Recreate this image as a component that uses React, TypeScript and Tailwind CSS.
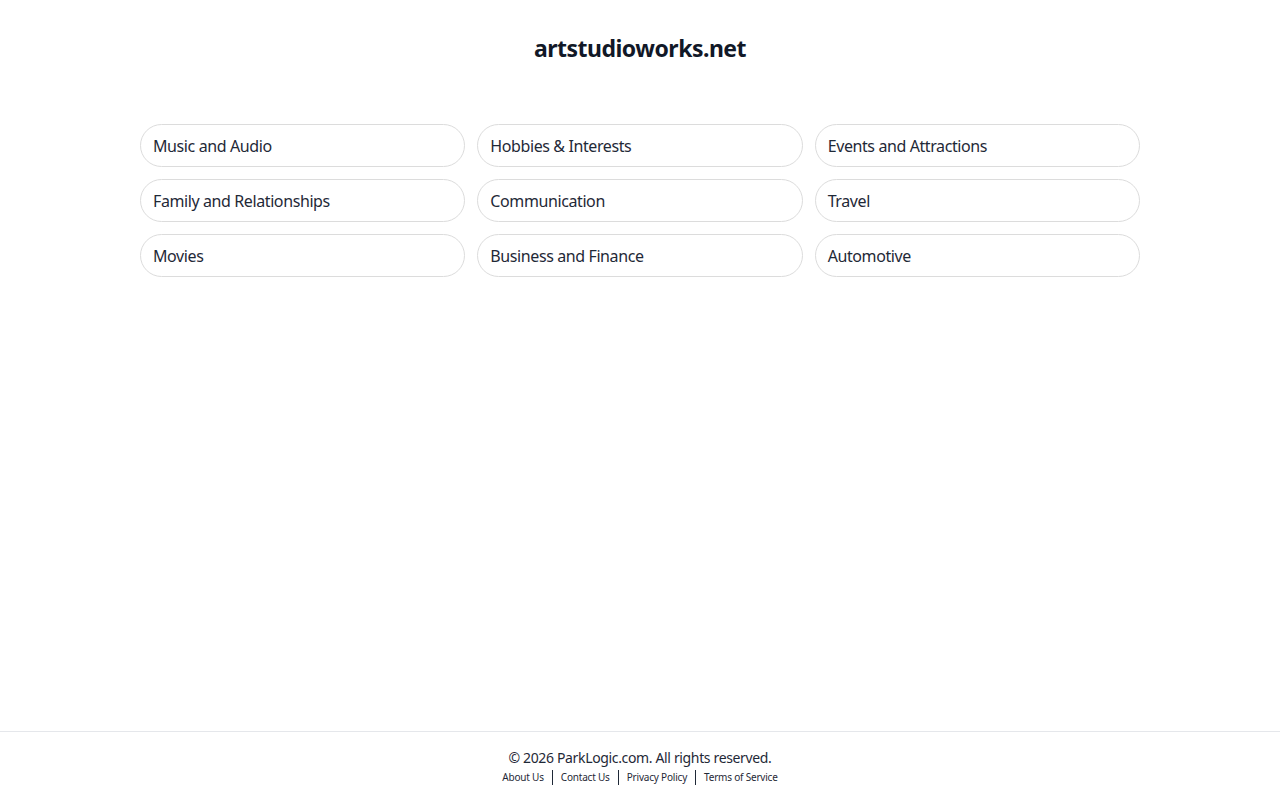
const CATEGORIES = [
  'Music and Audio',
  'Hobbies & Interests',
  'Events and Attractions',
  'Family and Relationships',
  'Communication',
  'Travel',
  'Movies',
  'Business and Finance',
  'Automotive',
];

const FOOTER_LINKS = ['About Us', 'Contact Us', 'Privacy Policy', 'Terms of Service'];

export default function App() {
  return (
    <div
      className="flex min-h-screen flex-col bg-white text-gray-900"
      style={{ fontFamily: '"Segoe UI", "Noto Sans", "Open Sans", sans-serif' }}
    >
      <main className="flex-1">
        <header className="pt-8 pb-[60px] text-center">
          <h1 className="text-[23px] leading-8 font-bold tracking-[-0.5px] text-[#111827]">
            artstudioworks.net
          </h1>
        </header>

        <div className="mx-auto grid w-[1000px] grid-cols-3 gap-3">
          {CATEGORIES.map((c) => (
            <a
              key={c}
              href="#"
              className="flex h-[43px] items-center rounded-full border border-[#dcdcdc] px-3 text-base tracking-[-0.4px] text-[#1f2937] hover:bg-gray-50"
            >
              {c}
            </a>
          ))}
        </div>
      </main>

      <footer className="border-t border-[#e5e7eb] pt-4 pb-[15px] text-center">
        <p className="text-sm leading-5 tracking-[-0.35px] text-[#1f2937]">
          © 2026 ParkLogic.com. All rights reserved.
        </p>
        <nav className="mt-[1px] flex items-center justify-center text-[10px] leading-4 tracking-[-0.2px] text-[#1f2937]">
          {FOOTER_LINKS.map((l, i) => (
            <span key={l} className="flex items-center">
              {i > 0 && <span className="mx-[8px] h-[15px] w-px bg-[#1f2937]" />}
              <a href="#">{l}</a>
            </span>
          ))}
        </nav>
      </footer>
    </div>
  );
}
